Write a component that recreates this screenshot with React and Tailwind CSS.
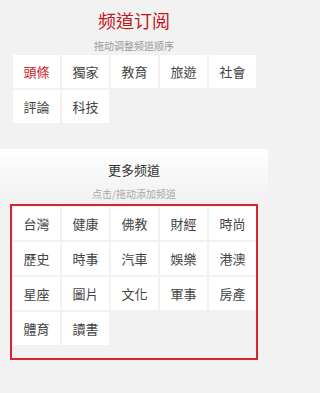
import React from "react";

const FONT = {
  fontFamily: '"Noto Sans CJK TC", "Noto Sans CJK SC", "Noto Sans", sans-serif',
};

const mine = ["頭條", "獨家", "教育", "旅遊", "社會", "評論", "科技"];
const more = [
  "台灣", "健康", "佛教", "財經", "時尚",
  "歷史", "時事", "汽車", "娛樂", "港澳",
  "星座", "圖片", "文化", "軍事", "房產",
  "體育", "讀書",
];

const Cell = ({ label, active }) => (
  <div
    className={
      "h-[33px] bg-white flex items-center justify-center text-[13px] " +
      (active ? "text-[#c9212b]" : "text-[#444]")
    }
  >
    {label}
  </div>
);

const App = () => {
  return (
    <div className="min-h-screen bg-[#f2f2f2]">
      <div className="w-[268px] h-[393px] bg-[#f2f2f2] overflow-hidden" style={FONT}>
        {/* my channels */}
        <div className="pt-[7px]">
          <h1 className="text-center text-[18px] leading-[26px] text-[#c4161c]">
            频道订阅
          </h1>
          <p className="text-center text-[10px] leading-[14px] mt-[6px] text-[#999]">
            拖动调整频道顺序
          </p>
          <div className="grid grid-cols-5 gap-[2px] pl-[13px] pr-[12px] mt-[2px]">
            {mine.map((m, i) => (
              <Cell key={m} label={m} active={i === 0} />
            ))}
          </div>
        </div>

        {/* more channels */}
        <div className="mt-[26px] pt-[12px] bg-gradient-to-b from-white to-[#f2f2f2] to-[50px]">
          <h2 className="text-center text-[13px] leading-[18px] text-[#333]">
            更多频道
          </h2>
          <p className="text-center text-[10px] leading-[14px] mt-[8px] text-[#aaa]">
            点击/拖动添加频道
          </p>
          <div className="mx-[10px] mt-[3px] border-2 border-[#d9232f] pt-[1px] pl-[1px] pb-[13px]">
            <div className="grid grid-cols-5 gap-[2px]">
              {more.map((m) => (
                <Cell key={m} label={m} />
              ))}
            </div>
          </div>
        </div>
      </div>
    </div>
  );
};

export default App;
